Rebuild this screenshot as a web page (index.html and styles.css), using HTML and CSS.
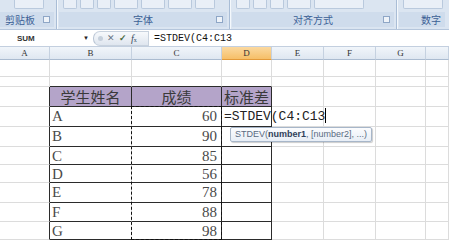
FILE: index.html
```html
<!DOCTYPE html>
<html>
<head>
  <title>STDEV</title>
  <link rel="stylesheet" href="styles.css">
</head>
<body>
  <div class="ribbon">
    <div class="group g-clip">
      <div class="btns"><span class="btn w30"></span></div>
      <div class="label">剪贴板<span class="launch"></span></div>
    </div>
    <div class="group g-font">
      <div class="btns"><span class="btn w14"></span><span class="btn w14"></span><span class="btn w14"></span><span class="btn w24"></span><span class="btn w24"></span><span class="btn w24"></span><span class="btn w20"></span></div>
      <div class="label">字体<span class="launch"></span></div>
    </div>
    <div class="group g-align">
      <div class="btns"><span class="btn w14"></span><span class="btn w14"></span><span class="btn w14"></span><span class="btn w24"></span><span class="btn w50"></span></div>
      <div class="label">对齐方式<span class="launch"></span></div>
    </div>
    <div class="group g-num">
      <div class="btns"><span class="btn w40"></span></div>
      <div class="label">数字</div>
    </div>
  </div>

  <div class="formula-bar">
    <div class="namebox">SUM<span class="arrow">&#9660;</span></div>
    <div class="fx-pill">
      <span class="dot"></span>
      <span class="x">&#10005;</span>
      <span class="ok">&#10003;</span>
      <span class="fx"><i>f</i><small>x</small></span>
    </div>
    <div class="formula">=STDEV(C4:C13</div>
  </div>

  <div class="col-heads">
    <div>A</div><div>B</div><div>C</div><div class="on">D</div><div>E</div><div>F</div><div>G</div><div></div>
  </div>

  <div class="sheet">
    <!-- row 1 -->
    <div></div><div></div><div></div><div></div><div></div><div></div><div></div><div></div>
    <!-- row 2 -->
    <div class="short"></div><div class="short db"></div><div class="short db"></div><div class="short db"></div><div class="short"></div><div class="short"></div><div class="short"></div><div class="short"></div>
    <!-- header -->
    <div class="dr"></div>
    <div class="th db dr">学生姓名</div>
    <div class="th db dr">成绩</div>
    <div class="th db dr">标准差</div>
    <div></div><div></div><div></div><div></div>
    <!-- data -->
    <div class="dr"></div><div class="name db">A</div><div class="num db dr">60</div>
    <div class="edit db dr">=STDEV(C4:C13<span class="caret"></span>
      <div class="tip">STDEV(<b>number1</b>, [number2], ...)</div>
    </div>
    <div></div><div></div><div></div><div></div>

    <div class="dr"></div><div class="name db">B</div><div class="num db dr">90</div><div class="db dr"></div><div></div><div></div><div></div><div></div>
    <div class="dr r18"></div><div class="name db r18">C</div><div class="num db dr r18">85</div><div class="db dr r18"></div><div class="r18"></div><div class="r18"></div><div class="r18"></div><div class="r18"></div>
    <div class="dr r18"></div><div class="name db r18">D</div><div class="num db dr r18">56</div><div class="db dr r18"></div><div class="r18"></div><div class="r18"></div><div class="r18"></div><div class="r18"></div>
    <div class="dr"></div><div class="name db">E</div><div class="num db dr">78</div><div class="db dr"></div><div></div><div></div><div></div><div></div>
    <div class="dr r19"></div><div class="name db r19">F</div><div class="num db dr r19">88</div><div class="db dr r19"></div><div class="r19"></div><div class="r19"></div><div class="r19"></div><div class="r19"></div>
    <div class="dr r18"></div><div class="name db r18">G</div><div class="num db dr r18">98</div><div class="db dr r18"></div><div class="r18"></div><div class="r18"></div><div class="r18"></div><div class="r18"></div>

    <div class="ants"></div>
  </div>
</body>
</html>
```

FILE: styles.css
```css
body {
  margin: 0;
  width: 449px;
  height: 247px;
  overflow: hidden;
  background: #fff;
  font-family: "Liberation Sans", Arial, sans-serif;
}

/* ribbon */
.ribbon {
  display: flex;
  height: 29px;
  background: #dbe5f1;
  border-bottom: 1px solid #b5c6dc;
}
.group {
  display: flex;
  flex-direction: column;
  border-right: 1px solid #a9bdd6;
  box-shadow: 1px 0 0 #f4f8fc;
  margin-right: 2px;
}
.g-clip { width: 56px; }
.g-font { width: 170px; }
.g-align { width: 164px; }
.g-num { flex: 1; border-right: none; box-shadow: none; }
.btns {
  height: 12px;
  display: flex;
  gap: 3px;
  padding: 0 4px;
  overflow: hidden;
}
.btn {
  height: 9px;
  margin-top: -1px;
  border: 1px solid #b9c9dd;
  border-top: none;
  border-radius: 0 0 2px 2px;
  background: #e9eff7;
}
.w14 { width: 12px; }
.w20 { width: 18px; }
.w24 { width: 22px; }
.w30 { width: 28px; margin-left: 10px; }
.w40 { width: 38px; }
.w50 { width: 48px; }
.label {
  position: relative;
  flex: 1;
  text-align: center;
  font-family: "Noto Sans CJK SC", sans-serif;
  font-size: 10px;
  line-height: 15px;
  color: #3b5f95;
  background: #cfdcec;
  margin: 0 2px 2px 0;
}
.g-clip .label { text-indent: -14px; }
.g-num .label { text-align: right; padding-right: 4px; }
.launch {
  position: absolute;
  right: 4px;
  top: 4px;
  width: 5px;
  height: 5px;
  border: 1px solid #8ea6c6;
  background: #eef3f9;
}

/* formula bar */
.formula-bar {
  display: flex;
  align-items: center;
  height: 16px;
  background: #fff;
  border-bottom: 1px solid #c3cfdf;
}
.namebox {
  width: 76px;
  padding-left: 17px;
  font-size: 8px;
  font-weight: bold;
  color: #333;
  position: relative;
}
.arrow {
  position: absolute;
  right: 4px;
  top: 1px;
  font-size: 6px;
  color: #222;
}
.fx-pill {
  display: flex;
  align-items: center;
  gap: 4px;
  width: 50px;
  height: 13px;
  padding-left: 4px;
  margin-right: 5px;
  border-radius: 7px 0 0 7px;
  background: linear-gradient(#f7f9fc, #dfe6ef);
  border: 1px solid #c8d2de;
  border-left-color: #b8c4d4;
}
.dot {
  width: 5px;
  height: 5px;
  border-radius: 50%;
  background: #c6d0dc;
}
.x { font-size: 9px; color: #6a7686; }
.ok { font-size: 9px; color: #4a6a3a; font-weight: bold; }
.fx {
  font-family: "Liberation Serif", serif;
  font-size: 10px;
  color: #3a4a5e;
}
.fx small { font-size: 6px; }
.formula {
  font-family: "Liberation Mono", monospace;
  font-size: 10px;
  color: #111;
}

/* column headings */
.col-heads, .sheet {
  display: grid;
  grid-template-columns: 50px 82px 90px 50px 52px 52px 50px 1fr;
}
.col-heads div {
  height: 12px;
  line-height: 12px;
  text-align: center;
  font-family: "Liberation Serif", serif;
  font-size: 9px;
  color: #333;
  background: linear-gradient(#f1f5fa, #dfe7f1);
  border-right: 1px solid #c5d1e0;
  border-bottom: 1px solid #aabbd0;
}
.col-heads .on {
  background: linear-gradient(#fbd9a0, #f6bf68);
  border-bottom-color: #e39a3a;
}

/* cells */
.sheet { position: relative; }
.sheet > div {
  height: 19px;
  border-right: 1px solid #dcdcdc;
  border-bottom: 1px solid #dcdcdc;
}
.sheet > div:nth-child(-n+8) { height: 16px; }
.sheet > .short { height: 9px; }
.sheet > .r18 { height: 17px; }
.sheet > .r19 { height: 18px; }
.sheet > .dr { border-right-color: #2b2b2b; }
.sheet > .db { border-bottom-color: #2b2b2b; }

.th {
  background: #b4a4c9;
  text-align: center;
  font-family: "Noto Sans CJK SC", sans-serif;
  font-size: 15px;
  line-height: 19px;
  color: #3a3a3a;
}
.name, .num {
  font-family: "Liberation Serif", serif;
  font-size: 15px;
  line-height: 19px;
  color: #4a4a4a;
  padding: 0 2px;
}
.num { text-align: right; padding-right: 4px; }
.edit {
  position: relative;
  white-space: nowrap;
  font-family: "Liberation Mono", monospace;
  font-size: 13px;
  line-height: 19px;
  color: #222;
  padding-left: 2px;
  z-index: 2;
}
.caret {
  display: inline-block;
  width: 1px;
  height: 15px;
  background: #000;
  vertical-align: -3px;
}
.tip {
  position: absolute;
  left: 8px;
  top: 20px;
  padding: 0 4px;
  height: 13px;
  line-height: 13px;
  font-family: "Liberation Sans", Arial, sans-serif;
  font-size: 9px;
  color: #5a6b82;
  background: linear-gradient(#fbfcfe, #e8eef6);
  border: 1px solid #a7b6c9;
  border-radius: 2px;
  box-shadow: 1px 1px 1px rgba(0, 0, 0, 0.2);
}
.tip b { color: #30405a; }

/* copy marquee over C4:C13 */
.sheet > .ants {
  position: absolute;
  left: 131px;
  top: 46px;
  width: 89px;
  height: 132px;
  border: 1px dashed #111;
  pointer-events: none;
}
```
